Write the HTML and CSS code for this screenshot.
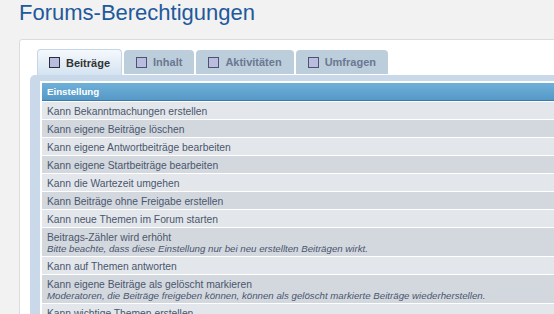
FILE: index.html
```html
<!doctype html>
<html lang="de">
  <head>
    <meta charset="UTF-8" />
    <title>Forums-Berechtigungen</title>
    <link rel="stylesheet" href="styles.css">
  </head>
  <body>
    <div class="page">
      <h1 class="title">Forums-Berechtigungen</h1>

      <div class="panel">
        <ul class="tabs">
          <li class="tab active"><span class="tab-box"></span>Beiträge</li>
          <li class="tab"><span class="tab-box"></span>Inhalt</li>
          <li class="tab"><span class="tab-box"></span>Aktivitäten</li>
          <li class="tab"><span class="tab-box"></span>Umfragen</li>
        </ul>

        <div class="tab-body">
          <div class="grid">
            <div class="grid-head">Einstellung</div>
            <div class="row">Kann Bekanntmachungen erstellen</div>
            <div class="row">Kann eigene Beiträge löschen</div>
            <div class="row">Kann eigene Antwortbeiträge bearbeiten</div>
            <div class="row">Kann eigene Startbeiträge bearbeiten</div>
            <div class="row">Kann die Wartezeit umgehen</div>
            <div class="row">Kann Beiträge ohne Freigabe erstellen</div>
            <div class="row">Kann neue Themen im Forum starten</div>
            <div class="row">
              Beitrags-Zähler wird erhöht
              <span class="hint">Bitte beachte, dass diese Einstellung nur bei neu erstellten Beiträgen wirkt.</span>
            </div>
            <div class="row">Kann auf Themen antworten</div>
            <div class="row">
              Kann eigene Beiträge als gelöscht markieren
              <span class="hint">Moderatoren, die Beiträge freigeben können, können als gelöscht markierte Beiträge wiederherstellen.</span>
            </div>
            <div class="row">Kann wichtige Themen erstellen</div>
            <div class="row">Kann Themen schließen</div>
          </div>
        </div>
      </div>
    </div>
  </body>
</html>
```

FILE: styles.css
```css
/* Base */
body {
  margin: 0;
  background-color: #f2f2f2;
  font-family: "Liberation Sans", Arial, sans-serif;
  overflow: hidden;
}

.page {
  width: 820px;
  padding-left: 19px;
}

.title {
  margin: 0;
  font-size: 22px;
  font-weight: normal;
  line-height: 25px;
  color: #21599b;
}

/* White panel around the tabs */
.panel {
  margin-top: 14px;
  padding: 9px 0 0 10px;
  background-color: #fff;
  border: 1px solid #dcdcdc;
  border-radius: 3px;
}

/* Tabs */
.tabs {
  display: flex;
  align-items: flex-end;
  gap: 2px;
  height: 26px;
  margin: 0 0 0 7px;
  padding: 0;
  list-style: none;
}

.tab {
  display: flex;
  align-items: center;
  gap: 6px;
  height: 24px;
  margin-bottom: 1px;
  padding: 0 12px;
  box-sizing: border-box;
  background-color: #bccddc;
  border-radius: 4px 4px 0 0;
  color: #6b7891;
  font-size: 11px;
  font-weight: bold;
}

.tab.active {
  height: 26px;
  margin-bottom: 0;
  padding: 0 11px;
  background: linear-gradient(#f5f9fd, #d4e3f1);
  border: 1px solid #c6d6e6;
  border-bottom: none;
  color: #333;
}

.tab-box {
  width: 11px;
  height: 11px;
  box-sizing: border-box;
  background-color: #b9bde0;
  border: 1px solid #4d5270;
}

.tab.active .tab-box {
  border-color: #2d2d3a;
}

/* Tab content */
.tab-body {
  padding: 6px 0 0 10px;
  background-color: #c9d9ea;
  border-radius: 5px 0 0 0;
}

.grid {
  display: flex;
  flex-direction: column;
  gap: 1px;
  padding: 2px 0 0 2px;
  background-color: #fff;
}

.grid-head {
  height: 17px;
  padding-left: 5px;
  line-height: 18px;
  background: linear-gradient(#6fb0d8, #5599c8);
  border-bottom: 1px solid #3b78a8;
  color: #fff;
  font-size: 9.7px;
  font-weight: bold;
}

.row {
  padding: 4px 5px 2px;
  line-height: 11px;
  font-size: 10.3px;
  color: #4a566c;
  background-color: #e3e7eb;
}

.row:nth-child(odd) {
  background-color: #d3d8df;
}

.hint {
  display: block;
  font-size: 9.7px;
  font-style: italic;
}
```
